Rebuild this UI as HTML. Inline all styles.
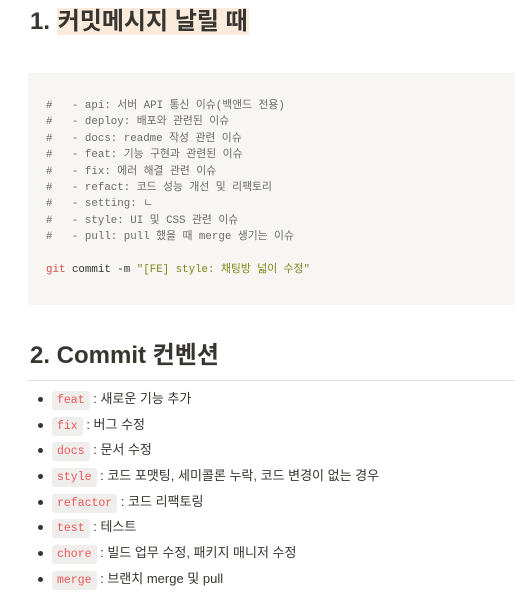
<!DOCTYPE html>
<html><head><meta charset="utf-8"><style>
body{margin:0;background:#fff;width:515px;height:606px;overflow:hidden;font-family:"Liberation Sans","Noto Sans CJK KR",sans-serif;color:#37352f;}
h1{position:absolute;left:30px;top:5px;margin:0;font-size:24px;font-weight:bold;line-height:34px;}
h1 span{background:#faebdd;padding:0 1px;}
pre{position:absolute;left:28px;top:73px;width:487px;height:232px;margin:0;background:#f7f6f3;font-family:"Liberation Mono","Noto Sans CJK KR",monospace;font-size:10.8px;line-height:16.4px;color:#6b6b6b;padding:25px 0 0 18px;box-sizing:border-box;}
.r{color:#d44c47}.k{color:#37352f}.s{color:#7a8a1a}
h2{position:absolute;left:30px;top:339px;margin:0;font-size:24px;font-weight:bold;line-height:34px;}
.hr{position:absolute;left:28px;top:380px;width:487px;height:1px;background:#e0e0e0;}
ul{position:absolute;left:0;top:387px;margin:0;padding:0 0 0 52px;list-style:none;font-size:13px;}
li{height:25.7px;line-height:24px;position:relative;}
li:before{content:"";position:absolute;left:-14px;top:10px;width:5px;height:5px;border-radius:50%;background:#37352f;}
code{font-family:"Liberation Mono",monospace;font-size:11.5px;color:#eb5757;background:#efeeec;border-radius:3px;padding:3px 5px;}
</style></head><body>
<h1>1. <span>커밋메시지 날릴 때</span></h1>
<pre>#   - api: 서버 API 통신 이슈(백앤드 전용)
#   - deploy: 배포와 관련된 이슈
#   - docs: readme 작성 관련 이슈
#   - feat: 기능 구현과 관련된 이슈
#   - fix: 에러 해결 관련 이슈
#   - refact: 코드 성능 개선 및 리팩토리
#   - setting: ㄴ
#   - style: UI 및 CSS 관련 이슈
#   - pull: pull 했을 때 merge 생기는 이슈

<span class="r">git</span> <span class="k">commit -m</span> <span class="s">"[FE] style: 채팅방 넓이 수정"</span></pre>
<h2>2. Commit 컨벤션</h2>
<div class="hr"></div>
<ul>
<li><code>feat</code> : 새로운 기능 추가</li>
<li><code>fix</code> : 버그 수정</li>
<li><code>docs</code> : 문서 수정</li>
<li><code>style</code> : 코드 포맷팅, 세미콜론 누락, 코드 변경이 없는 경우</li>
<li><code>refactor</code> : 코드 리팩토링</li>
<li><code>test</code> : 테스트</li>
<li><code>chore</code> : 빌드 업무 수정, 패키지 매니저 수정</li>
<li><code>merge</code> : 브랜치 merge 및 pull</li>
</ul>
</body></html>
